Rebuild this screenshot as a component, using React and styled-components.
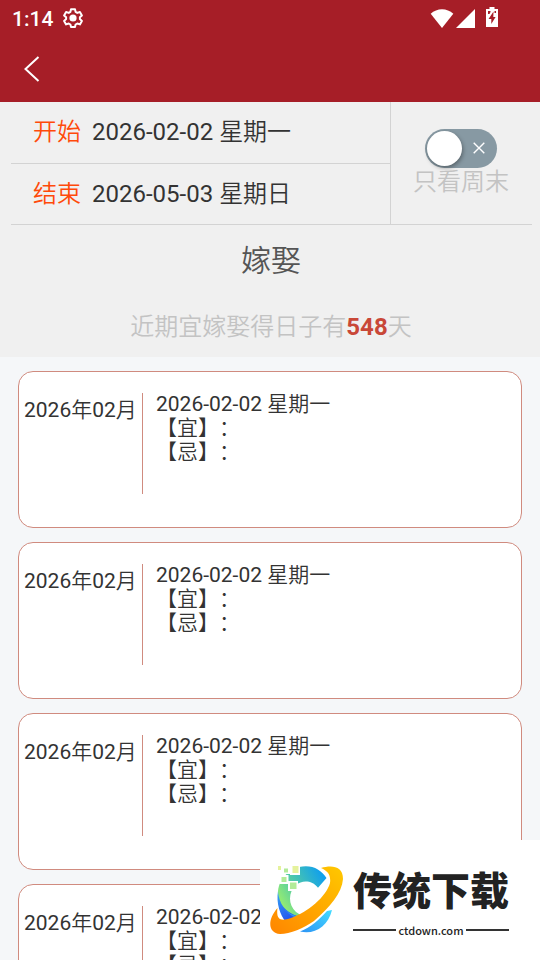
import React, { useState } from "react";
import styled, { createGlobalStyle } from "styled-components";

const days = [
  { month: "2026年02月", date: "2026-02-02 星期一" },
  { month: "2026年02月", date: "2026-02-02 星期一" },
  { month: "2026年02月", date: "2026-02-02 星期一" },
  { month: "2026年02月", date: "2026-02-02 星期一" },
];

export default function App() {
  const [weekend, setWeekend] = useState(false);

  return (
    <Page>
      <GlobalStyle />
      <Header>
        <StatusBar />
        <NavBar>
          <BackButton type="button" aria-label="返回">
            <svg width="16" height="26" viewBox="0 0 16 26" fill="none">
              <path d="M14.5 1 1.500 13l13 12" stroke="#fff" strokeWidth="2" />
            </svg>
          </BackButton>
        </NavBar>
      </Header>
      <Summary>
        <Filter>
          <Dates>
            <DateButton type="button">
              <DateLabel>开始</DateLabel>
              2026-02-02 星期一
            </DateButton>
            <DateButton type="button">
              <DateLabel>结束</DateLabel>
              2026-05-03 星期日
            </DateButton>
          </Dates>
          <WeekendLabel>
            <SwitchBox>
              <SwitchInput
                type="checkbox"
                role="switch"
                checked={weekend}
                onChange={(e) => setWeekend(e.target.checked)}
              />
              {!weekend && (
                <SwitchCross width="12" height="12" viewBox="0 0 12 12">
                  <path d="M.7.7l10.600 10.600M11.300.7L.7 11.300" stroke="#fff" strokeWidth="1.400" />
                </SwitchCross>
              )}
            </SwitchBox>
            只看周末
          </WeekendLabel>
        </Filter>
        <Title>嫁娶</Title>
        <Count>
          近期宜嫁娶得日子有<CountNumber>548</CountNumber>天
        </Count>
      </Summary>
      <List>
        {days.map((day, index) => (
          <Card key={index}>
            <Month>{day.month}</Month>
            <Detail>
              <p>{day.date}</p>
              <p>【宜】：</p>
              <p>【忌】：</p>
            </Detail>
          </Card>
        ))}
      </List>
      <Brand />
    </Page>
  );
}

function StatusBar() {
  return (
    <StatusRow>
      <Clock>1:14</Clock>
      <svg width="20" height="20" viewBox="0 0 20 20" fill="none">
        <path
          d="M8 1.200h4l.6 2.700 1.700 1 2.600-.9 2 3.500-2 1.800v1.800l2 1.800-2 3.500-2.600-.9-1.700 1-.6 2.500H8l-.6-2.500-1.700-1-2.600.9-2-3.500 2-1.800V9.300l-2-1.800 2-3.500 2.600.9 1.700-1z"
          stroke="#fff"
          strokeWidth="2"
          strokeLinejoin="round"
        />
        <circle cx="10" cy="10" r="3.600" fill="#fff" />
      </svg>
      <Signals>
        <svg width="24" height="19" viewBox="0 0 24 19" fill="#fff">
          <path d="M.7 4.800C7-1.300 17-1.300 23.300 4.800L12 19z" />
        </svg>
        <svg width="19" height="19" viewBox="0 0 19 19" fill="#fff">
          <path d="M19 0v19H0z" />
        </svg>
        <BatteryIcon width="12" height="20" viewBox="0 0 12 20">
          <path d="M3.500 0h5v2H12v18H0V2h3.500z" fill="#fff" />
          <path
            d="M2 4h2.500v1L3.500 7H2zM10 4H8.500v2H10zM7.500 4.500 2.500 12h2.800v5l4.300-7H7.300z"
            fill="#a61e27"
          />
        </BatteryIcon>
      </Signals>
    </StatusRow>
  );
}

function Brand() {
  return (
    <BrandBox>
      <svg width="74" height="70" viewBox="0 0 74 70">
        <defs>
          <linearGradient id="arc" x1="0" y1="0.900" x2="1" y2="0.300">
            <stop offset="0.100" stopColor="#9cf06c" />
            <stop offset="0.500" stopColor="#4fc9a8" />
            <stop offset="1" stopColor="#11a0ec" />
          </linearGradient>
          <linearGradient id="ring" x1="1" y1="0" x2="0" y2="1">
            <stop offset="0" stopColor="#ffc800" />
            <stop offset="1" stopColor="#ff8500" />
          </linearGradient>
          <linearGradient id="tail" x1="0" y1="1" x2="1" y2="0">
            <stop offset="0" stopColor="#2d93f5" />
            <stop offset="1" stopColor="#43dcff" />
          </linearGradient>
          <linearGradient id="edge" x1="0" y1="0" x2="0.500" y2="1">
            <stop offset="0" stopColor="#36a6f3" />
            <stop offset="1" stopColor="#2450ee" />
          </linearGradient>
        </defs>
        <path
          d="M29 2C41-1 51 4 56.500 13L48 22.700C42 15 32 15 26 20c-8 7-8 20 0 27l6 4-10 4C13 48 8 38 8 28 8 16 17 5 29 2z"
          fill="url(#arc)"
        />
        <path d="M8 26c1 12 6 21 22 26l-14 5C10 50 6 38 8 26z" fill="url(#edge)" />
        <path d="M8 26c1 14 7 23 22 26l-4 1C15 48 9 39 8 26z" fill="#2e9af0" />
        <path d="M62 45c-4 17-18 25-32 21.500C41 62 49 55 57 46z" fill="url(#tail)" />
        <path
          d="M51 3C62 0 73 1 73 14 72 28 60 42 44 56 34 63 20 69 10 69-2 68-3 55 7.500 43 6 54 10 57 21 53 38 47 56 32 60 18 61 10 58 6 51 3z"
          fill="url(#ring)"
        />
        <g fill="#fff">
          <path d="M5 0h16v9H5zM20 0h10v10H20zM9.500 10h9v9h-9zM18 16h10v10H18z" />
        </g>
        <path d="M8 1h3v4H8zM22.500 1h6v7h-6z" fill="#e5f29c" />
        <path d="M14 3.500h4v4h-4zM11.500 12h5v5h-5zM20 17.500h6.500v6.500H20z" fill="#b2eb98" />
      </svg>
      <BrandText>
        <BrandName>传统下载</BrandName>
        <BrandSite>ctdown.com</BrandSite>
      </BrandText>
    </BrandBox>
  );
}

const GlobalStyle = createGlobalStyle`
  * {
    box-sizing: border-box;
  }

  body {
    margin: 0;
    font-family: Roboto, "Noto Sans CJK SC DemiLight", "Noto Sans CJK SC", sans-serif;
    color: #333333;
  }

  p,
  h1,
  ul {
    margin: 0;
    padding: 0;
  }

  svg {
    flex: none;
  }

  button {
    padding: 0;
    border: none;
    background: none;
    font: inherit;
    color: inherit;
    cursor: pointer;
  }
`;

const Page = styled.div`
  display: flex;
  flex-direction: column;
  height: 100vh;
  overflow: hidden;
  background-color: #f5f7f9;
`;

const Header = styled.header`
  flex: none;
  background-color: #a61e27;
`;

const StatusRow = styled.div`
  display: flex;
  align-items: center;
  gap: 10px;
  height: 36px;
  padding: 0 42px 0 12px;
  color: #ffffff;
`;

const Clock = styled.span`
  padding-top: 2px;
  font-size: 21px;
  font-weight: 500;
  line-height: 24px;
`;

const Signals = styled.div`
  display: flex;
  align-items: center;
  gap: 2px;
  margin-left: auto;
`;

const BatteryIcon = styled.svg`
  margin: 0 0 2px 9px;
`;

const NavBar = styled.nav`
  display: flex;
  align-items: center;
  height: 66px;
  padding-left: 24px;
`;

const BackButton = styled.button`
  display: flex;
`;

const Summary = styled.section`
  flex: none;
  padding-bottom: 15px;
  background-color: #f0f0f0;
  text-align: center;
`;

const Filter = styled.div`
  display: grid;
  grid-template-columns: 1fr 141px;
  margin: 0 8px 0 11px;
  border-bottom: 1px solid #d3d3d3;
`;

const Dates = styled.div`
  display: flex;
  flex-direction: column;
  border-right: 1px solid #d3d3d3;
`;

const DateButton = styled.button`
  display: flex;
  align-items: center;
  gap: 11px;
  height: 61px;
  padding: 0 0 6px 22px;
  font-size: 24px;

  & + & {
    border-top: 1px solid #d3d3d3;
  }
`;

const DateLabel = styled.span`
  color: #ff4a0a;
`;

const WeekendLabel = styled.label`
  display: flex;
  flex-direction: column;
  align-items: center;
  padding: 27px 1px 0 0;
  font-size: 24px;
  line-height: 28px;
  color: #c3c3c3;
`;

const SwitchBox = styled.span`
  display: grid;
  align-items: center;
`;

const SwitchInput = styled.input`
  grid-area: 1 / 1;
  appearance: none;
  width: 72px;
  height: 39px;
  margin: 0;
  padding: 2px;
  border-radius: 20px;
  background-color: ${(props) => (props.checked ? "#a61e27" : "#8799a3")};
  cursor: pointer;

  &::before {
    content: "";
    display: block;
    width: 35px;
    height: 35px;
    margin-left: ${(props) => (props.checked ? "auto" : "0")};
    border-radius: 50%;
    background-color: #ffffff;
    box-shadow: 1px 2px 4px rgba(0, 0, 0, 0.35);
  }
`;

const SwitchCross = styled.svg`
  grid-area: 1 / 1;
  justify-self: end;
  margin: 0 12px 2px 0;
  pointer-events: none;
`;

const Title = styled.h1`
  padding: 15px 0 13px 2px;
  font-size: 30px;
  font-weight: 400;
  line-height: 42px;
  color: #555555;
`;

const Count = styled.p`
  padding: 17px 0 0 2px;
  font-size: 24px;
  line-height: 30px;
  color: #c3c3c3;
`;

const CountNumber = styled.strong`
  color: #c94838;
`;

const List = styled.ul`
  display: flex;
  flex-direction: column;
  flex: 1;
  gap: 14px;
  min-height: 0;
  padding: 14px 18px;
  overflow-y: auto;
  list-style: none;

  &::-webkit-scrollbar {
    display: none;
  }
`;

const Card = styled.li`
  display: flex;
  flex: none;
  min-height: 157px;
  padding: 20px 5px 33px;
  border: 1px solid #d08b7f;
  border-radius: 15px;
  background-color: #ffffff;
  font-size: 21px;
  line-height: 24px;
`;

const Month = styled.p`
  width: 119px;
  height: 101px;
  margin-top: 1px;
  padding-top: 5px;
  border-right: 1px solid #d08b7f;
  white-space: nowrap;
`;

const Detail = styled.div`
  flex: 1;
  padding-left: 13px;
  text-spacing-trim: space-all;
  font-kerning: none;
`;

const BrandBox = styled.aside`
  position: fixed;
  right: 0;
  bottom: 0;
  display: flex;
  align-items: center;
  gap: 9px;
  width: 280px;
  height: 120px;
  padding-left: 10px;
  background-color: #ffffff;
`;

const BrandText = styled.div`
  width: 156px;
  color: #222222;
  font-family: "Noto Sans CJK SC", sans-serif;
`;

const BrandName = styled.p`
  padding-bottom: 8px;
  font-size: 39px;
  font-weight: 900;
  line-height: 52px;
`;

const BrandSite = styled.p`
  display: flex;
  align-items: center;
  gap: 2px;
  font-size: 11px;
  font-weight: 500;
  line-height: 16px;

  &::before,
  &::after {
    content: "";
    flex: 1;
    height: 2px;
    background-color: #333333;
  }
`;
